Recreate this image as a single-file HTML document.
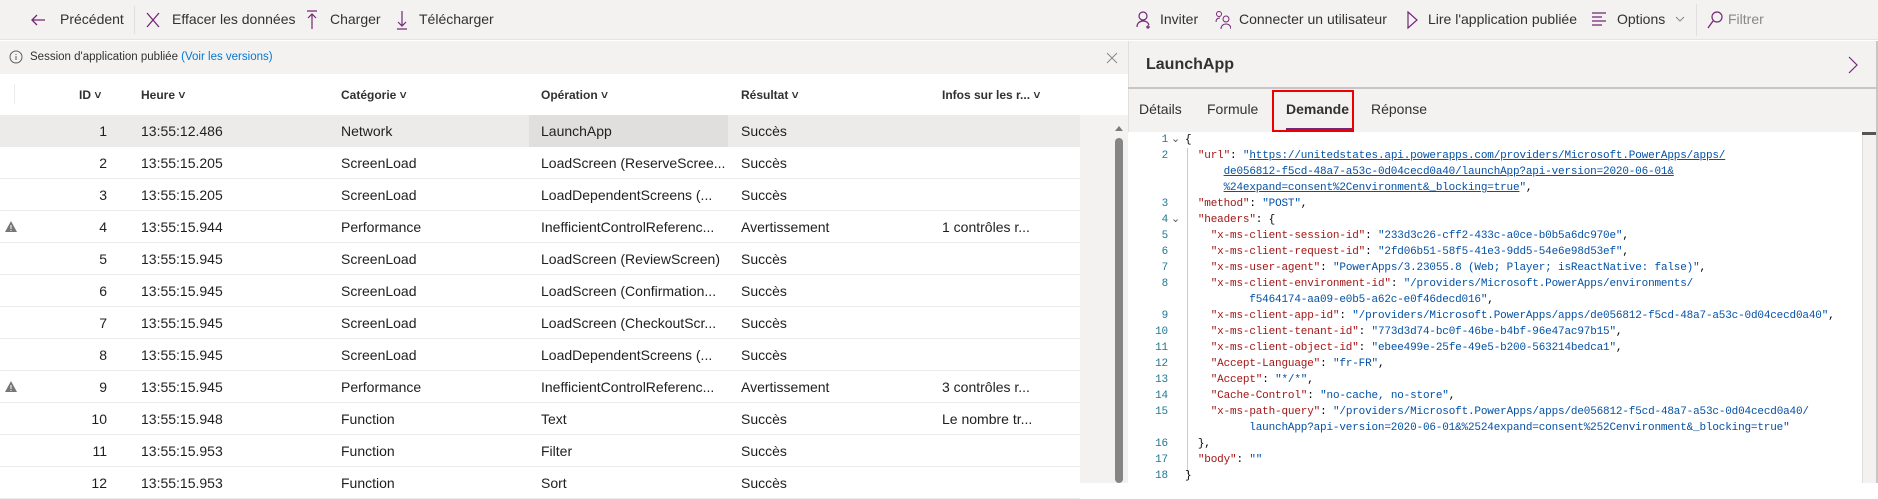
<!DOCTYPE html><html><head><meta charset="utf-8"><style>
*{margin:0;padding:0;box-sizing:border-box}
body{width:1878px;height:483px;overflow:hidden;background:#fff;font-family:"Liberation Sans",sans-serif;color:#201f1e;position:relative}
.a{position:absolute;white-space:nowrap}
.tb{left:0;top:0;width:1878px;height:40px;background:#f3f2f1;border-bottom:1px solid #e6e4e2}
.tbi{top:11px;font-size:14px;color:#323130}
.info{left:0;top:41px;width:1128px;height:33px;background:#f3f2f1}
.hdr{top:74px;height:41px;left:0;width:1080px;background:#fff}
.hd{top:88px;font-size:12px;font-weight:bold;color:#323130}
.row{left:0;width:1080px;height:32px;border-bottom:1px solid #edebe9}
.c{font-size:14px;top:8px}
.rp{left:1128px;top:41px;width:750px;height:91px;background:#f3f2f1;border-left:1px solid #e1dfdd}
.code{font-family:"Liberation Mono",monospace;font-size:11px;letter-spacing:-0.17px;line-height:16px}
.k{color:#a31515}.s{color:#0451a5}.u{color:#0451a5;text-decoration:underline}
.ln{color:#237893;width:30px;text-align:right;left:1138px}
</style></head><body>
<div class="a tb"></div>
<svg class="a" style="left:30px;top:12px" width="16" height="16"><path d="M15 8H2M7 3L2 8l5 5" stroke="#742774" stroke-width="1.3" fill="none"/></svg>
<div class="a tbi" style="left:60px">Précédent</div>
<div class="a" style="left:134px;top:6px;width:1px;height:28px;background:#e1dfdd"></div>
<svg class="a" style="left:145px;top:11px" width="16" height="18"><path d="M2 2l12 14M14 2L2 16" stroke="#742774" stroke-width="1.3"/></svg>
<div class="a tbi" style="left:172px">Effacer les données</div>
<svg class="a" style="left:306px;top:10px" width="12" height="20"><path d="M1 1h10M6 4v15M2 8l4-4 4 4" stroke="#742774" stroke-width="1.2" fill="none"/></svg>
<div class="a tbi" style="left:330px">Charger</div>
<svg class="a" style="left:396px;top:10px" width="12" height="20"><path d="M1 19h10M6 1v15M2 12l4 4 4-4" stroke="#742774" stroke-width="1.2" fill="none"/></svg>
<div class="a tbi" style="left:419px">Télécharger</div>
<svg class="a" style="left:1136px;top:10px" width="16" height="20"><circle cx="7" cy="6" r="4" stroke="#742774" fill="none" stroke-width="1.2"/><path d="M1 17c0-4 3-6 6-6s5 1 6 4M12 15v4M10 17h4" stroke="#742774" fill="none" stroke-width="1.2"/></svg>
<div class="a tbi" style="left:1160px">Inviter</div>
<svg class="a" style="left:1215px;top:10px" width="16" height="20"><circle cx="4" cy="4" r="2.5" stroke="#742774" fill="none"/><circle cx="11" cy="9" r="3" stroke="#742774" fill="none"/><path d="M1 12c0-3 2-4 4-4M6 19c0-3 2-5 5-5s5 2 5 5" stroke="#742774" fill="none"/></svg>
<div class="a tbi" style="left:1239px">Connecter un utilisateur</div>
<svg class="a" style="left:1406px;top:11px" width="12" height="18"><path d="M2 1l9 8-9 8z" stroke="#742774" fill="none" stroke-width="1.2"/></svg>
<div class="a tbi" style="left:1428px">Lire l'application publiée</div>
<svg class="a" style="left:1592px;top:12px" width="14" height="16"><path d="M0 1h14M0 5h10M0 9h14M0 13h10" stroke="#742774" stroke-width="1.3"/></svg>
<div class="a tbi" style="left:1617px">Options</div>
<svg class="a" style="left:1675px;top:16px" width="10" height="8"><path d="M1 1l4 4 4-4" stroke="#8a8886" fill="none"/></svg>
<div class="a" style="left:1696px;top:4px;width:1px;height:32px;background:#e1dfdd"></div>
<svg class="a" style="left:1707px;top:11px" width="16" height="18"><circle cx="10" cy="6" r="5" stroke="#742774" fill="none" stroke-width="1.2"/><path d="M6 10L1 17" stroke="#742774" stroke-width="1.3"/></svg>
<div class="a tbi" style="left:1728px;color:#8a8886">Filtrer</div>

<div class="a info"></div>
<svg class="a" style="left:9px;top:50px" width="14" height="14"><circle cx="7" cy="7" r="6" stroke="#605e5c" fill="none"/><path d="M7 6v4M7 4v1" stroke="#605e5c"/></svg>
<div class="a" style="left:30px;top:51px;font-size:11.5px;color:#323130">Session d'application publiée <span style="color:#0078d4">(Voir les versions)</span></div>
<svg class="a" style="left:1106px;top:52px" width="12" height="12"><path d="M1 1l10 10M11 1L1 11" stroke="#8a8886"/></svg>

<div class="a hdr"></div>
<div class="a" style="left:14px;top:84px;width:1px;height:20px;background:#edebe9"></div>
<div class="a hd" style="left:79px">ID ˅</div>
<div class="a hd" style="left:141px">Heure ˅</div>
<div class="a hd" style="left:341px">Catégorie ˅</div>
<div class="a hd" style="left:541px">Opération ˅</div>
<div class="a hd" style="left:741px">Résultat ˅</div>
<div class="a hd" style="left:942px">Infos sur les r... ˅</div>
<div class="a" style="left:1080px;top:74px;width:48px;height:41px;background:#fff"></div>
<div class="a" style="left:1080px;top:115px;width:48px;height:368px;background:#f3f2f1"></div>
<div class="a" style="left:1115px;top:126px;width:0;height:0;border:4px solid transparent;border-bottom:5px solid #7a7a7a;border-top:0"></div>
<div class="a" style="left:1115px;top:138px;width:8px;height:345px;background:#858585;border-radius:4px"></div>

<div id="rows"></div>
<script>
var d=[["1","13:55:12.486","Network","LaunchApp","Succès",""],["2","13:55:15.205","ScreenLoad","LoadScreen (ReserveScree...","Succès",""],["3","13:55:15.205","ScreenLoad","LoadDependentScreens (...","Succès",""],["4","13:55:15.944","Performance","InefficientControlReferenc...","Avertissement","1 contrôles r..."],["5","13:55:15.945","ScreenLoad","LoadScreen (ReviewScreen)","Succès",""],["6","13:55:15.945","ScreenLoad","LoadScreen (Confirmation...","Succès",""],["7","13:55:15.945","ScreenLoad","LoadScreen (CheckoutScr...","Succès",""],["8","13:55:15.945","ScreenLoad","LoadDependentScreens (...","Succès",""],["9","13:55:15.945","Performance","InefficientControlReferenc...","Avertissement","3 contrôles r..."],["10","13:55:15.948","Function","Text","Succès","Le nombre tr..."],["11","13:55:15.953","Function","Filter","Succès",""],["12","13:55:15.953","Function","Sort","Succès",""]];
var h="";d.forEach(function(r,i){var t=115+i*32;
h+='<div class="a row" style="top:'+t+'px;'+(i==0?'background:#edebe9':'')+'">'+(i==0?'<div class="a" style="left:529px;top:0;width:199px;height:32px;background:#e1dfdd"></div>':'')+
(r[4]=="Avertissement"?'<svg class="a" style="left:5px;top:10px" width="12" height="11"><path d="M6 0L12 11H0z" fill="#797775"/><path d="M6 4v4M6 9v1" stroke="#fff"/></svg>':'')+
'<div class="a c" style="right:'+(1080-107)+'px">'+r[0]+'</div><div class="a c" style="left:141px">'+r[1]+'</div><div class="a c" style="left:341px">'+r[2]+'</div><div class="a c" style="left:541px">'+r[3]+'</div><div class="a c" style="left:741px">'+r[4]+'</div><div class="a c" style="left:942px">'+r[5]+'</div></div>';});
document.getElementById("rows").innerHTML=h;
</script>

<div class="a rp"></div>
<div class="a" style="left:1146px;top:56px;font-size:16px;font-weight:bold;color:#323130">LaunchApp</div>
<svg class="a" style="left:1848px;top:56px" width="10" height="18"><path d="M1 1l8 8-8 8" stroke="#742774" fill="none" stroke-width="1.2"/></svg>
<div class="a" style="left:1128px;top:87px;width:750px;height:2px;background:#c8c6c4"></div>
<div class="a" style="left:1139px;top:101px;font-size:14px;color:#323130">Détails</div>
<div class="a" style="left:1207px;top:101px;font-size:14px;color:#323130">Formule</div>
<div class="a" style="left:1286px;top:101px;font-size:14px;font-weight:bold;color:#323130">Demande</div>
<div class="a" style="left:1371px;top:101px;font-size:14px;color:#323130">Réponse</div>
<div class="a" style="left:1286px;top:128px;width:68px;height:3px;background:#742774"></div>
<div class="a" style="left:1272px;top:90px;width:82px;height:42px;border:2px solid #e00"></div>
<div class="a" style="left:1128px;top:132px;width:735px;height:351px;background:#fff"></div>
<div class="a" style="left:1862px;top:132px;width:14px;height:351px;background:#f3f2f1;border-left:1px solid #ddd"></div>
<div class="a" style="left:1862px;top:132px;width:14px;height:3px;background:#555"></div>
<div class="a" style="left:1876px;top:41px;width:2px;height:442px;background:#c8c6c4"></div>
<div class="a" style="left:1187px;top:148px;width:1px;height:326px;background:#ccc"></div>
<div class="a code ln" style="top:132px">1<br>2<br><br><br>3<br>4<br>5<br>6<br>7<br>8<br><br>9<br>10<br>11<br>12<br>13<br>14<br>15<br><br>16<br>17<br>18</div>
<div class="a code" style="left:1171px;top:132px;color:#555">⌄<br><br><br><br><br>⌄</div>
<div class="a code" style="left:1185px;top:132px;color:#000;white-space:pre">{
  <span class="k">"url"</span>: <span class="s">"<span class="u">https://unitedstates.api.powerapps.com/providers/Microsoft.PowerApps/apps/</span></span>
      <span class="u">de056812-f5cd-48a7-a53c-0d04cecd0a40/launchApp?api-version=2020-06-01&amp;</span>
      <span class="u">%24expand=consent%2Cenvironment&amp;_blocking=true</span><span class="s">"</span>,
  <span class="k">"method"</span>: <span class="s">"POST"</span>,
  <span class="k">"headers"</span>: {
    <span class="k">"x-ms-client-session-id"</span>: <span class="s">"233d3c26-cff2-433c-a0ce-b0b5a6dc970e"</span>,
    <span class="k">"x-ms-client-request-id"</span>: <span class="s">"2fd06b51-58f5-41e3-9dd5-54e6e98d53ef"</span>,
    <span class="k">"x-ms-user-agent"</span>: <span class="s">"PowerApps/3.23055.8 (Web; Player; isReactNative: false)"</span>,
    <span class="k">"x-ms-client-environment-id"</span>: <span class="s">"/providers/Microsoft.PowerApps/environments/</span>
<span class="s">          f5464174-aa09-e0b5-a62c-e0f46decd016"</span>,
    <span class="k">"x-ms-client-app-id"</span>: <span class="s">"/providers/Microsoft.PowerApps/apps/de056812-f5cd-48a7-a53c-0d04cecd0a40"</span>,
    <span class="k">"x-ms-client-tenant-id"</span>: <span class="s">"773d3d74-bc0f-46be-b4bf-96e47ac97b15"</span>,
    <span class="k">"x-ms-client-object-id"</span>: <span class="s">"ebee499e-25fe-49e5-b200-563214bedca1"</span>,
    <span class="k">"Accept-Language"</span>: <span class="s">"fr-FR"</span>,
    <span class="k">"Accept"</span>: <span class="s">"*/*"</span>,
    <span class="k">"Cache-Control"</span>: <span class="s">"no-cache, no-store"</span>,
    <span class="k">"x-ms-path-query"</span>: <span class="s">"/providers/Microsoft.PowerApps/apps/de056812-f5cd-48a7-a53c-0d04cecd0a40/</span>
<span class="s">          launchApp?api-version=2020-06-01&amp;%2524expand=consent%252Cenvironment&amp;_blocking=true"</span>
  },
  <span class="k">"body"</span>: <span class="s">""</span>
}</div>
</body></html>
